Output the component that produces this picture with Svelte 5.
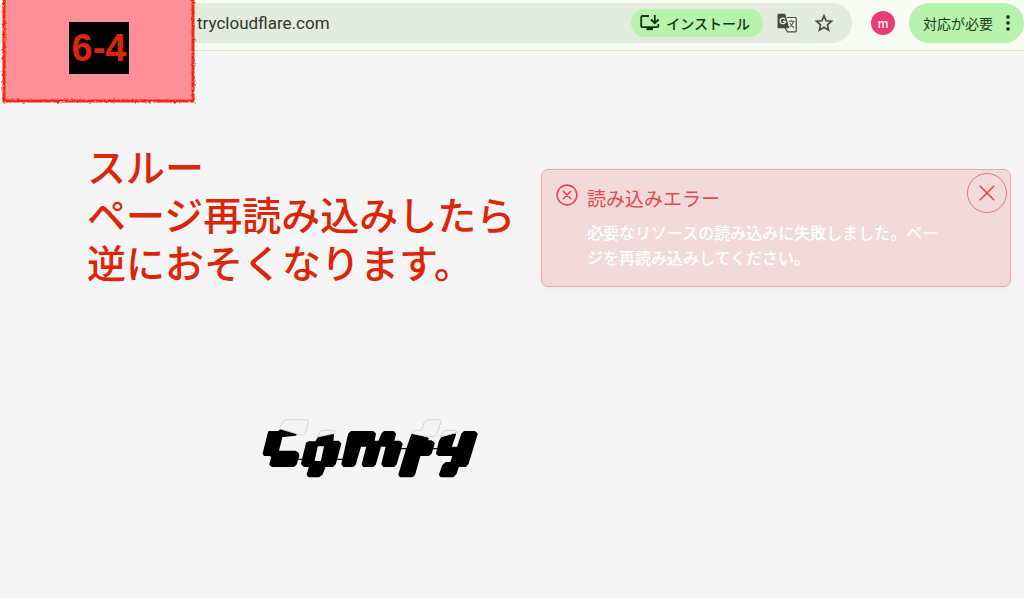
<script lang="ts">
    const url = "trycloudflare.com";
    const stepLabel = "6-4";
    const noteLines = ["スルー", "ページ再読み込みしたら", "逆におそくなります。"];

    let alertOpen = $state(true);
    let address = $state(url);
</script>

<div class="page">
    <header class="toolbar">
        <div class="address-bar">
            <input
                class="address"
                type="text"
                aria-label="アドレス"
                bind:value={address}
            />
            <button class="install" type="button">
                <svg viewBox="0 0 20 18" width="20" height="18" aria-hidden="true">
                    <path
                        d="M9 2H2.5Q1.2 2 1.2 3.3V12Q1.2 13.2 2.5 13.2H17Q18.3 13.2 18.3 12V10"
                        fill="none"
                        stroke="currentColor"
                        stroke-width="1.8"
                    />
                    <path d="M6.5 13h6.5v3.2H6.5z" fill="currentColor" />
                    <path
                        d="M14.8 1V9M11 5.5L14.8 9.2L18.6 5.5"
                        fill="none"
                        stroke="currentColor"
                        stroke-width="1.8"
                    />
                </svg>
                <span>インストール</span>
            </button>
            <button class="icon-btn" type="button" aria-label="翻訳">
                <svg viewBox="0 0 20 20" width="20" height="20" aria-hidden="true">
                    <path
                        d="M10 4.5H18.3Q19.2 4.5 19.2 5.4V18Q19.2 18.9 18.3 18.9H10.5L8 15"
                        fill="#eef3e8"
                        stroke="#454b43"
                        stroke-width="1.2"
                    />
                    <path
                        d="M1.5 .7H8.2L12.3 15.3H1.5Q.5 15.3 .5 14.3V1.7Q.5 .7 1.5 .7z"
                        fill="#454b43"
                    />
                    <path
                        d="M8 6.1A2.8 2.8 0 1 0 8.6 8.4H5.9"
                        fill="none"
                        stroke="#eef3e8"
                        stroke-width="1.3"
                    />
                    <path
                        d="M11.5 8.3H17.6M14.2 7V8.3M16.4 8.5Q15.5 12 12.8 14M12.8 10Q14 12.8 17 14.8"
                        fill="none"
                        stroke="#59605a"
                        stroke-width="1.1"
                    />
                </svg>
            </button>
            <button class="icon-btn" type="button" aria-label="ブックマーク">
                <svg viewBox="0 0 18 18" width="18" height="18" aria-hidden="true">
                    <path
                        d="M9 1.8L11.1 6.8L16.6 7.2L12.4 10.8L13.7 16.2L9 13.3L4.3 16.2L5.6 10.8L1.4 7.2L6.9 6.8z"
                        fill="none"
                        stroke="#454b43"
                        stroke-width="1.6"
                    />
                </svg>
            </button>
        </div>
        <button class="avatar" type="button">m</button>
        <button class="menu" type="button">
            <span>対応が必要</span>
            <svg viewBox="0 0 6 18" width="6" height="18" aria-hidden="true">
                <circle cx="3" cy="3" r="1.8" />
                <circle cx="3" cy="9" r="1.8" />
                <circle cx="3" cy="15" r="1.8" />
            </svg>
        </button>
    </header>

    <main>
        <div class="top-row">
            <p class="note">
                {#each noteLines as line}
                    <span>{line}</span>
                {/each}
            </p>

            {#if alertOpen}
                <section class="alert" role="alert">
                    <svg class="alert-icon" viewBox="0 0 22 22" width="22" height="22" aria-hidden="true">
                        <circle cx="11" cy="11" r="9.9" />
                        <path d="M7.3 7.3L14.7 14.7M14.7 7.3L7.3 14.7" />
                    </svg>
                    <div class="alert-text">
                        <h2>読み込みエラー</h2>
                        <p>必要なリソースの読み込みに失敗しました。ページを再読み込みしてください。</p>
                    </div>
                    <button
                        class="alert-close"
                        type="button"
                        aria-label="閉じる"
                        onclick={() => (alertOpen = false)}
                    >
                        <svg viewBox="0 0 16 16" width="16" height="16" aria-hidden="true">
                            <path d="M1.2 1.2L14.8 14.8M14.8 1.2L1.2 14.8" />
                        </svg>
                    </button>
                </section>
            {/if}
        </div>

        <svg class="logo" viewBox="0 0 720 255" width="240" height="85" role="img" aria-label="Comfy">
            <path class="logo-link" d="M138 160H158M258 160H278M452 128H482M536 128H566" />
            <g class="logo-fill">
                <path d="M58 79H86L92 74L136 85L94 90L82 138H134L142 142L144 150L136 174L130 179H66L62 175L68 151L60 146H44L42 142Z" />
                <path
                    fill-rule="evenodd"
                    d="M176 110H198L206 97L248 87L246 108H264L270 114L254 172L248 179H224L214 204L206 210H178L174 206L182 179H164L157 173L160 160L172 112Z
                    M200 117L189 169H216L227 117Z"
                />
                <path d="M304 79H368L374 84L369 108H388L398 84L404 79H430L434 84L428 108H448L454 114L436 174L430 179H402L398 174L412 118H390L374 174L368 179H342L339 175L354 118H330L314 174L308 179H282L278 174L298 86Z" />
                <path d="M487 88L522 95L532 98L526 107H544L550 112L542 140L536 146H508L492 204L486 210H452L449 206L472 130Z" />
                <path d="M576 97L614 86L600 126H624L638 84L644 79H674L679 84L652 172L646 179H624L616 202L608 210H574L571 206L580 180L588 172H604L612 146H566L562 142L570 108Z" />
            </g>
            <g class="logo-line">
                <path d="M88 68L98 48Q102 41 112 41H166Q177 42 175 52L166 80Q162 90 150 87z" />
                <path d="M203 93L208 80Q211 73 220 73H248Q257 74 255 82z" />
                <path d="M484 82L489 76Q492 73 500 73H515L521 52Q525 41 537 41H563Q574 43 572 52L560 84Q556 92 546 92H530z" />
                <path d="M571 92L577 80Q581 73 590 73H614Q624 74 620 80z" />
            </g>
        </svg>
    </main>

    <div class="step-card">
        <svg class="step-edge" aria-hidden="true">
            <defs>
                <filter id="rough" x="-5%" y="-5%" width="110%" height="110%">
                    <feTurbulence type="fractalNoise" baseFrequency="0.35" numOctaves="2" seed="4" />
                    <feDisplacementMap in="SourceGraphic" scale="3" />
                </filter>
            </defs>
            <rect x="4" y="-10" width="189" height="111" filter="url(#rough)" />
        </svg>
        <strong>{stepLabel}</strong>
    </div>
</div>

<style>
    :global(body) {
        margin: 0;
        background: #f5f5f5;
    }

    .page {
        position: relative;
        min-height: 100vh;
        overflow: hidden;
        font-family: Inter, "Noto Sans CJK JP", sans-serif;
    }

    button,
    input {
        border: 0;
        padding: 0;
        background: none;
        font: inherit;
    }

    button {
        cursor: pointer;
    }

    svg {
        display: block;
        flex: none;
    }

    .toolbar {
        display: flex;
        align-items: center;
        height: 40px;
        padding: 3px 0 7px;
        background: #f8fbf1;
        border-bottom: 1px solid #dfe2dc;
    }

    .address-bar {
        display: flex;
        flex: 1;
        align-items: center;
        box-sizing: border-box;
        height: 40px;
        padding: 0 19px 0 197px;
        background: #e3ebdc;
        border-radius: 0 20px 20px 0;
    }

    .address {
        flex: 1;
        min-width: 0;
        color: #30362f;
        font-family: Roboto, sans-serif;
        font-size: 17px;
        outline: none;
    }

    .install {
        display: flex;
        align-items: center;
        gap: 6px;
        height: 28px;
        margin-right: 14px;
        padding: 0 13px 0 9px;
        border-radius: 14px;
        background: #b7f3ad;
        color: #14350f;
        font-size: 14px;
        font-weight: 500;
    }

    .icon-btn + .icon-btn {
        margin-left: 18px;
    }

    .avatar {
        width: 24px;
        height: 24px;
        margin: 0 14px 0 19px;
        border-radius: 50%;
        background: #eb3b77;
        color: #fff;
        font-size: 12px;
        font-weight: 500;
    }

    .menu {
        display: flex;
        align-items: center;
        gap: 12px;
        height: 40px;
        padding: 0 13px 0 14px;
        border-radius: 20px;
        background: #b7f3ad;
        color: #1c3a18;
        font-size: 14px;
    }

    .menu svg {
        fill: #14290f;
    }

    .top-row {
        display: flex;
        justify-content: space-between;
        align-items: flex-start;
        padding: 93px 13px 0 87px;
    }

    .note {
        margin: 0;
        color: #dd2508;
        font-size: 39px;
        font-weight: 500;
        line-height: 48px;
        white-space: nowrap;
    }

    .note span {
        display: block;
    }

    .alert {
        display: flex;
        align-items: flex-start;
        gap: 9px;
        box-sizing: border-box;
        width: 470px;
        margin-top: 25px;
        padding: 14px 3px 15px 14px;
        border: 1px solid #e3a9af;
        border-radius: 7px;
        background: #f2dadb;
        box-shadow: 0 3px 8px rgba(0, 0, 0, 0.04);
    }

    .alert-icon,
    .alert-close svg {
        fill: none;
        stroke: #e5484d;
        stroke-width: 1.6;
        stroke-linecap: round;
    }

    .alert-text {
        flex: 1;
    }

    .alert-text h2 {
        margin: 0;
        color: #e5484d;
        font-size: 19px;
        font-weight: 400;
        line-height: 31px;
    }

    .alert-text p {
        margin: 6px 0 0;
        color: #fff;
        font-size: 16px;
        font-weight: 500;
        line-height: 25px;
    }

    .alert-close {
        display: grid;
        place-items: center;
        box-sizing: border-box;
        width: 40px;
        height: 40px;
        margin: -11px 0 0 12px;
        border: 1px solid #e87378;
        border-radius: 50%;
    }

    .logo {
        margin: 118px 0 0 250px;
    }

    .logo-line {
        fill: #f5f5f5;
        stroke: #c4c4c4;
        stroke-width: 2;
    }

    .logo-link {
        stroke: #111;
        stroke-width: 4;
    }

    .logo-fill {
        fill: #000;
        stroke: #000;
        stroke-width: 8;
        stroke-linejoin: round;
    }

    .step-card {
        position: absolute;
        top: 0;
        left: 0;
        display: grid;
        grid-template-rows: 100%;
        place-items: center;
        width: 198px;
        height: 96px;
    }

    .step-edge,
    .step-card strong {
        grid-area: 1 / 1;
    }

    .step-edge {
        width: 100%;
        height: 100%;
        overflow: visible;
    }

    .step-edge rect {
        fill: #ff8f97;
        stroke: #f32613;
        stroke-width: 3;
    }

    .step-card strong {
        z-index: 1;
        padding: 2px 3px;
        background: #000;
        color: #dd2508;
        font-family: "Liberation Sans", sans-serif;
        font-size: 38px;
        line-height: 48px;
    }
</style>
